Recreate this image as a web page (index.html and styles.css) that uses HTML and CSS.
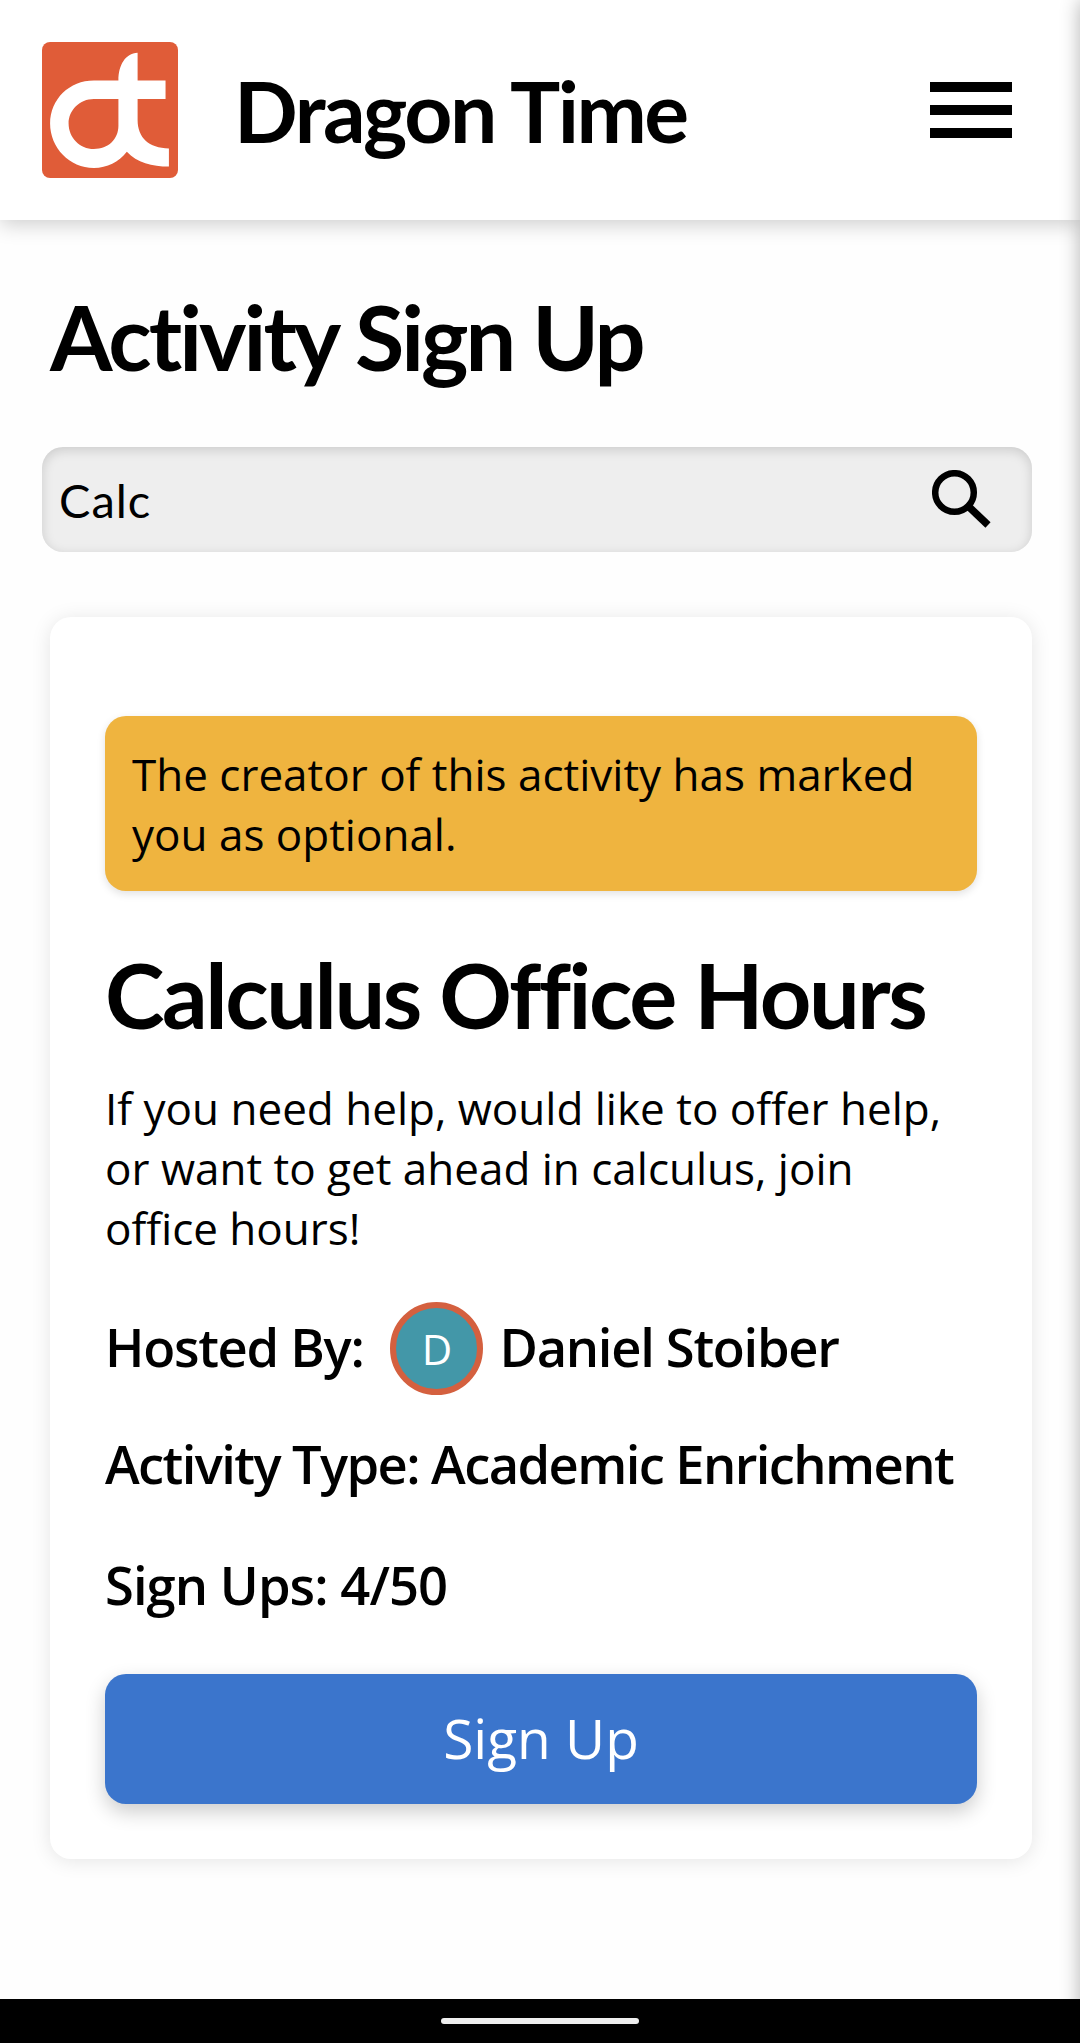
FILE: index.html
```html
<!DOCTYPE html>
<html lang="en">
<head>
    <meta charset="UTF-8">
    <title>Dragon Time</title>
    <link rel="stylesheet" href="styles.css">
</head>
<body>
    <header class="topbar">
        <svg class="logo" viewBox="68 66 404 404" aria-hidden="true">
            <rect x="68" y="66" width="404" height="404" rx="24" fill="#e05c38"/>
            <path fill="#fff" d="M352 98V180H435V235H352V298C352 350 385 382 445 382V436C395 436 350 425 320 392C295 423 262 440 222 440C150 440 92 380 92 308C92 235 150 180 222 180H295C295 135 315 100 352 98ZM295 235H222C180 235 147 268 147 308C147 350 180 384 222 384C265 384 295 355 295 315Z"/>
        </svg>
        <div class="brand">Dragon Time</div>
        <button class="menu-btn" aria-label="Menu">
            <span></span><span></span><span></span>
        </button>
    </header>

    <main class="content">
        <h1 class="page-title">Activity Sign Up</h1>
        <div class="search">
            <span class="search-text">Calc</span>
            <svg class="search-icon" viewBox="0 0 60 60" aria-hidden="true">
                <circle cx="22.5" cy="22.5" r="19.3" fill="none" stroke="#000" stroke-width="6.5"/>
                <path d="M35 35L56 55" stroke="#000" stroke-width="7.5" fill="none"/>
            </svg>
        </div>

        <section class="card">
            <div class="notice">The creator of this activity has marked you as optional.</div>
            <h2 class="activity-title">Calculus Office Hours</h2>
            <p class="activity-desc">If you need help, would like to offer help, or want to get ahead in calculus, join office hours!</p>
            <div class="info host">
                <span class="host-text">Hosted By:</span>
                <span class="avatar">D</span>
                <span class="host-text">Daniel Stoiber</span>
            </div>
            <div class="info type">Activity Type: Academic Enrichment</div>
            <div class="info count">Sign Ups: 4/50</div>
            <button class="signup-btn">Sign Up</button>
        </section>
    </main>

    <div class="nav-bar"><span class="nav-pill"></span></div>
    <div class="drawer-edge"></div>
</body>
</html>
```

FILE: styles.css
```css
html, body {
    margin: 0;
    padding: 0;
}
body {
    width: 1080px;
    height: 2043px;
    overflow: hidden;
    display: flex;
    flex-direction: column;
    position: relative;
    background-color: #fefefe;
    font-family: "Open Sans", sans-serif;
    color: #000;
}
.topbar {
    height: 220px;
    flex: none;
    display: flex;
    align-items: center;
    padding: 0 68px 0 42px;
    box-sizing: border-box;
    background-color: #fff;
    box-shadow: 0 4px 20px rgba(0, 0, 0, 0.2);
    position: relative;
}
.logo {
    width: 136px;
    height: 136px;
    flex: none;
}
.brand {
    margin-left: 56px;
    padding-top: 2px;
    flex: 1;
    font-family: "Lato", sans-serif;
    font-size: 84px;
    font-weight: 700;
    line-height: 1;
    letter-spacing: -2.5px;
}
.menu-btn {
    width: 82px;
    padding: 0;
    border: none;
    background: none;
    display: flex;
    flex-direction: column;
    gap: 13px;
}
.menu-btn span {
    height: 10px;
    background-color: #000;
}
.content {
    flex: 1;
    padding: 0 48px 0 42px;
}
.page-title {
    margin: 0;
    padding: 75px 0 0 8px;
    font-family: "Lato", sans-serif;
    font-size: 90px;
    font-weight: 700;
    line-height: 82px;
    letter-spacing: -3px;
}
.search {
    margin-top: 70px;
    height: 105px;
    display: flex;
    align-items: center;
    justify-content: space-between;
    padding: 0 40px 0 17px;
    box-sizing: border-box;
    background-color: #eee;
    border-radius: 21px;
    box-shadow: inset 0 3px 12px rgba(0, 0, 0, 0.15);
}
.search-text {
    font-family: "Lato", sans-serif;
    font-size: 47px;
    letter-spacing: 1px;
}
.search-icon {
    width: 60px;
    height: 60px;
}
.card {
    margin: 65px 0 0 8px;
    padding: 99px 55px 55px;
    background-color: #fff;
    border-radius: 21px;
    box-shadow: 0 2px 20px rgba(0, 0, 0, 0.1);
}
.notice {
    padding: 28px 27px 27px;
    background-color: #efb43f;
    border-radius: 21px;
    font-size: 44px;
    line-height: 60px;
    box-shadow: 0 3px 8px rgba(0, 0, 0, 0.12);
}
.activity-title {
    margin: 53px 0 0;
    font-family: "Lato", sans-serif;
    font-size: 90px;
    font-weight: 700;
    line-height: 100px;
    letter-spacing: -2.45px;
}
.activity-desc {
    margin: 34px 0 0;
    font-size: 44px;
    line-height: 60px;
}
.info {
    font-size: 52.5px;
    font-weight: 600;
    line-height: 68px;
    letter-spacing: -1.6px;
}
.host {
    margin-top: 44px;
    display: flex;
    align-items: center;
    letter-spacing: -1.3px;
}
.host-text {
    padding-bottom: 4px;
}
.avatar {
    width: 93px;
    height: 93px;
    margin: 0 16px 0 27px;
    display: flex;
    align-items: center;
    justify-content: center;
    box-sizing: border-box;
    border: 6px solid #d4603f;
    border-radius: 50%;
    background-color: #4397a8;
    color: #fff;
    font-size: 42px;
    font-weight: 400;
    letter-spacing: 0;
}
.type {
    margin-top: 35px;
}
.count {
    margin-top: 53px;
    letter-spacing: -0.95px;
}
.signup-btn {
    display: block;
    width: 100%;
    height: 130px;
    margin-top: 55px;
    padding: 0 0 4px;
    border: none;
    border-radius: 21px;
    background-color: #3b75cc;
    color: #fff;
    font-family: "Open Sans", sans-serif;
    font-size: 55px;
    box-shadow: 0 8px 20px rgba(0, 0, 0, 0.2);
}
.nav-bar {
    height: 44px;
    flex: none;
    display: flex;
    align-items: center;
    justify-content: center;
    background-color: #000;
    position: relative;
    z-index: 2;
}
.nav-pill {
    width: 198px;
    height: 6px;
    border-radius: 3px;
    background-color: #eee;
}
/* closed side menu, only its shadow shows at the right edge */
.drawer-edge {
    position: absolute;
    top: 0;
    bottom: 0;
    left: 1080px;
    width: 40px;
    box-shadow: 0 0 20px rgba(0, 0, 0, 0.3);
}
```
